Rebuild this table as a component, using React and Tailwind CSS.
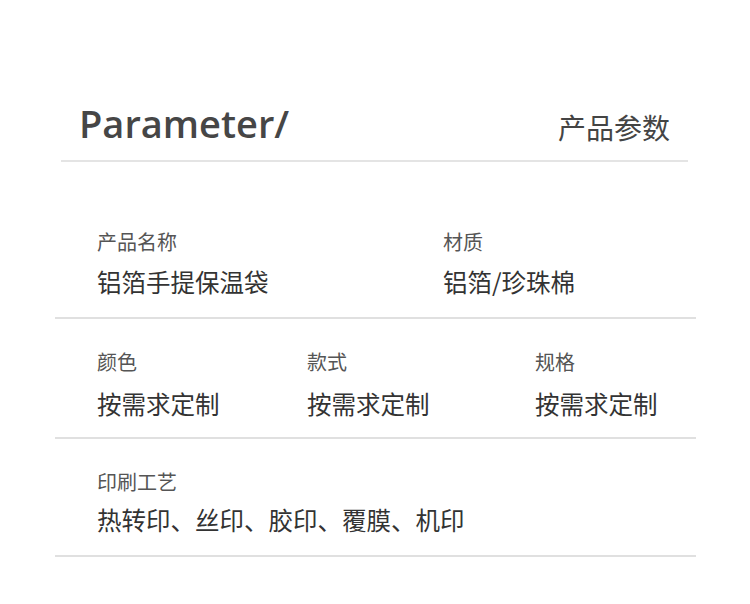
export default function App() {
  const cjk = { fontFamily: '"Noto Sans CJK SC", "Noto Sans", sans-serif' };
  return (
    <div className="w-[750px] h-[604px] bg-white overflow-hidden" style={cjk}>
      <div className="ml-[61px] w-[627px] pt-[99px] pb-[13px] pl-[18px] pr-[18px] flex items-end justify-between border-b-2 border-[#e4e4e4]">
        <div className="text-[38px] leading-[48px] font-semibold text-[#464646]" style={{ fontFamily: '"Open Sans", sans-serif' }}>
          Parameter/
        </div>
        <div className="text-[28px] leading-[40px] text-[#444]">产品参数</div>
      </div>

      <div className="ml-[55px] w-[641px]">
        <div className="grid grid-cols-[346px_1fr] pl-[42px] pt-[66px] pb-[19px] border-b-2 border-[#e0e0e0]">
          <div className="flex flex-col">
            <div className="text-[20px] leading-[28px] text-[#555]">产品名称</div>
            <div className="mt-[10px] text-[24.5px] leading-[32px] text-[#333]">铝箔手提保温袋</div>
          </div>
          <div className="flex flex-col">
            <div className="text-[20px] leading-[28px] text-[#555]">材质</div>
            <div className="mt-[10px] text-[24.5px] leading-[32px] text-[#333]">铝箔/珍珠棉</div>
          </div>
        </div>

        <div className="grid grid-cols-[210px_228px_1fr] pl-[42px] pt-[29px] pb-[17px] border-b-2 border-[#e0e0e0]">
          {["颜色", "款式", "规格"].map((l) => (
            <div key={l} className="flex flex-col">
              <div className="text-[20px] leading-[28px] text-[#555]">{l}</div>
              <div className="mt-[12px] text-[24.5px] leading-[32px] text-[#333]">按需求定制</div>
            </div>
          ))}
        </div>

        <div className="pl-[42px] pt-[29px] pb-[19px] border-b-2 border-[#e0e0e0]">
          <div className="text-[20px] leading-[28px] text-[#555]">印刷工艺</div>
          <div className="mt-[8px] text-[24.5px] leading-[32px] text-[#333]">热转印、丝印、胶印、覆膜、机印</div>
        </div>
      </div>
    </div>
  );
}
